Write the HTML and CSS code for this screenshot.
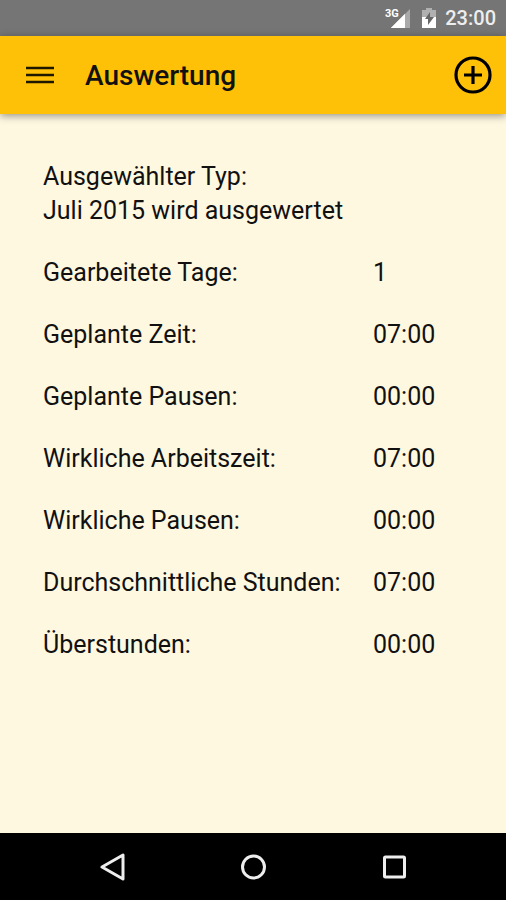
FILE: index.html
```
<!DOCTYPE html>
<html lang="de">
<head>
    <meta charset="UTF-8">
    <meta name="viewport" content="width=device-width, initial-scale=1.0">
    <title>Auswertung</title>
    <link rel="stylesheet" href="styles.css">
</head>
<body>
    <div class="status-bar">
        <svg class="signal" width="26" height="22" viewBox="0 0 26 22" aria-hidden="true">
            <path d="M25 2v19H6z" fill="#a9a9a9"/>
            <path d="M20 7v14H6z" fill="#fff"/>
            <rect x="0" y="0" width="14" height="12" fill="#757575"/>
            <path d="M20 7v14H6z" fill="#fff"/>
            <text x="0" y="10">3G</text>
        </svg>
        <svg class="battery" width="14" height="20" viewBox="0 0 14 20" aria-hidden="true">
            <path d="M4 0h6v2h4v18H0V2h4z" fill="#b0b0b0"/>
            <path d="M0 9h14v11H0z" fill="#fff"/>
            <path d="M8 4L3 11h3v6l6-8H8z" fill="#666"/>
        </svg>
        <span class="clock">23:00</span>
    </div>
    <header>
        <button type="button" class="icon-button" aria-label="Menü">
            <svg width="28" height="18" viewBox="0 0 28 18">
                <path d="M0 2h28M0 9h28M0 16h28" stroke="#1f1800" stroke-width="2.3"/>
            </svg>
        </button>
        <h1>Auswertung</h1>
        <button type="button" class="icon-button" aria-label="Hinzufügen">
            <svg width="38" height="38" viewBox="0 0 38 38" fill="none" stroke="#000" stroke-width="3.2">
                <circle cx="19" cy="19" r="17"/>
                <path d="M19 10v18M10 19h18"/>
            </svg>
        </button>
    </header>
    <main>
        <p>Ausgewählter Typ:<br>Juli 2015 wird ausgewertet</p>
        <table>
            <tr><th scope="row">Gearbeitete Tage:</th><td>1</td></tr>
            <tr><th scope="row">Geplante Zeit:</th><td>07:00</td></tr>
            <tr><th scope="row">Geplante Pausen:</th><td>00:00</td></tr>
            <tr><th scope="row">Wirkliche Arbeitszeit:</th><td>07:00</td></tr>
            <tr><th scope="row">Wirkliche Pausen:</th><td>00:00</td></tr>
            <tr><th scope="row">Durchschnittliche Stunden:</th><td>07:00</td></tr>
            <tr><th scope="row">Überstunden:</th><td>00:00</td></tr>
        </table>
    </main>
    <nav>
        <button type="button" class="icon-button" aria-label="Zurück">
            <svg width="28" height="28" viewBox="0 0 28 28">
                <path d="M25 2v24L4 14z"/>
            </svg>
        </button>
        <button type="button" class="icon-button" aria-label="Startseite">
            <svg width="28" height="28" viewBox="0 0 28 28">
                <circle cx="14.5" cy="14" r="11"/>
            </svg>
        </button>
        <button type="button" class="icon-button" aria-label="Übersicht">
            <svg width="28" height="28" viewBox="0 0 28 28">
                <rect x="4.5" y="4" width="20" height="20" rx="1"/>
            </svg>
        </button>
    </nav>
</body>
</html>
```
FILE: styles.css
```
body {
    display: flex;
    flex-direction: column;
    min-height: 100vh;
    margin: 0;
    font-family: Roboto, sans-serif;
    background-color: #fff8e1;
    color: #111;
}
.status-bar {
    display: flex;
    align-items: center;
    justify-content: flex-end;
    height: 36px;
    padding-right: 10px;
    background-color: #757575;
    color: #eee;
}
.signal text {
    font-size: 11px;
    font-weight: 700;
    fill: #fff;
}
.battery {
    margin: 0 9px 0 11px;
}
.clock {
    font-size: 20px;
    font-weight: 500;
}
header {
    display: flex;
    align-items: center;
    height: 78px;
    padding: 0 14px 0 26px;
    background-color: #ffc107;
    box-shadow: 0 2px 8px rgba(0, 0, 0, 0.4);
}
h1 {
    flex: 1;
    margin: 0 0 0 31px;
    font-size: 28px;
    font-weight: 500;
}
.icon-button {
    padding: 0;
    border: none;
    background: none;
    cursor: pointer;
}
.icon-button svg {
    display: block;
}
main {
    flex: 1;
    padding: 46px 43px;
    font-size: 25px;
    line-height: 34px;
}
p {
    margin: 0 0 14px;
}
table {
    width: 100%;
    border-collapse: collapse;
}
th,
td {
    padding: 14px 0;
    font-weight: 400;
    text-align: left;
}
th {
    width: 330px;
}
nav {
    display: flex;
    align-items: center;
    justify-content: space-between;
    height: 67px;
    padding: 0 98px;
    background-color: #000;
}
nav svg {
    fill: none;
    stroke: #eee;
    stroke-width: 3;
    stroke-linejoin: round;
}
```
